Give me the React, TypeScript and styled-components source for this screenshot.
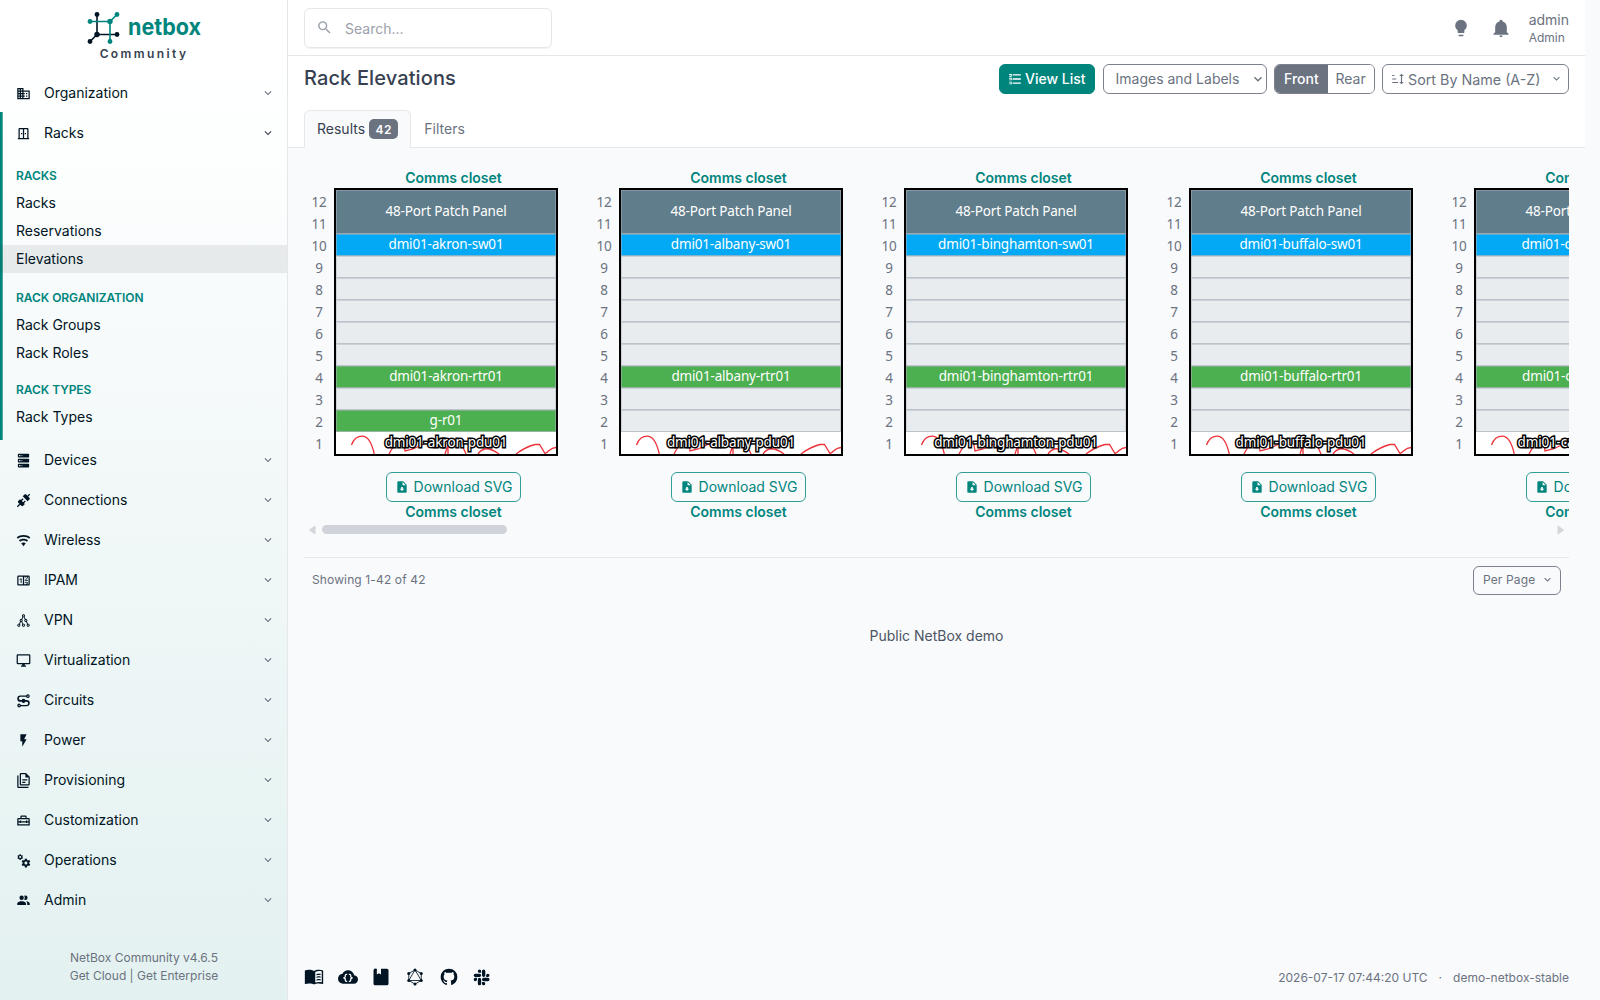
import React from 'react';
import styled, { createGlobalStyle, css } from 'styled-components';

const teal = '#00857d';
const ink = '#001423';
const muted = '#6b7280';
const line = '#e6e7e9';

const Global = createGlobalStyle`
  *, *::before, *::after { box-sizing: border-box; }
  body {
    margin: 0;
    background: #f9fafc;
    color: #374151;
    font: 400 14px/20px Inter, "Liberation Sans", sans-serif;
    overflow: hidden;
  }
`;

/* ---------- icons ---------- */

const icons = {
  domain: 'M18,15H16V17H18M18,11H16V13H18M20,19H12V17H14V15H12V13H14V11H12V9H20M10,7H8V5H10M10,11H8V9H10M10,15H8V13H10M10,19H8V17H10M6,7H4V5H6M6,11H4V9H6M6,15H4V13H6M6,19H4V17H6M12,7V3H2V21H22V7H12Z',
  rack: 'M18 3H6C4.9 3 4 3.9 4 5V19H3V21H21V19H20V5C20 3.9 19.1 3 18 3M11 19H6V5H11V19M18 19H13V5H18V19M8 11H10V13H8V11M14 11H16V13H14V11Z',
  server: 'M4,1H20A1,1 0 0,1 21,2V6A1,1 0 0,1 20,7H4A1,1 0 0,1 3,6V2A1,1 0 0,1 4,1M4,9H20A1,1 0 0,1 21,10V14A1,1 0 0,1 20,15H4A1,1 0 0,1 3,14V10A1,1 0 0,1 4,9M4,17H20A1,1 0 0,1 21,18V22A1,1 0 0,1 20,23H4A1,1 0 0,1 3,22V18A1,1 0 0,1 4,17M9,5H10V3H9V5M9,13H10V11H9V13M9,21H10V19H9V21M5,3V5H7V3H5M5,11V13H7V11H5M5,19V21H7V19H5Z',
  connection: 'M21.4 7.5C22.2 8.3 22.2 9.6 21.4 10.3L18.6 13.1L10.8 5.3L13.6 2.5C14.4 1.7 15.7 1.7 16.4 2.5L18.2 4.3L21.2 1.3L22.6 2.7L19.6 5.7L21.4 7.5M15.6 13.3L14.2 11.9L11.4 14.7L9.3 12.6L12.1 9.8L10.7 8.4L7.9 11.2L6.4 9.8L3.6 12.6C2.8 13.4 2.8 14.7 3.6 15.4L5.4 17.2L1.4 21.2L2.8 22.6L6.8 18.6L8.6 20.4C9.4 21.2 10.7 21.2 11.4 20.4L14.2 17.6L12.8 16.2L15.6 13.3Z',
  wifi: 'M12,21L15.6,16.2C14.6,15.45 13.35,15 12,15C10.65,15 9.4,15.45 8.4,16.2L12,21M12,3C7.95,3 4.21,4.34 1.2,6.6L3,9C5.5,7.12 8.62,6 12,6C15.38,6 18.5,7.12 21,9L22.8,6.6C19.79,4.34 16.05,3 12,3M12,9C9.3,9 6.81,9.89 4.8,11.4L6.6,13.8C8.1,12.67 9.97,12 12,12C14.03,12 15.9,12.67 17.4,13.8L19.2,11.4C17.19,9.89 14.7,9 12,9Z',
  counter: 'M4,4H20A2,2 0 0,1 22,6V18A2,2 0 0,1 20,20H4A2,2 0 0,1 2,18V6A2,2 0 0,1 4,4M4,6V18H11V6H4M20,18V6H18.76C19,6.54 18.95,7.07 18.95,7.13C18.88,7.8 18.41,8.5 18.24,8.75L15.91,11.3L19.23,11.28L19.24,12.5L14.04,12.47L14,11.47C14,11.47 17.05,8.24 17.2,7.95C17.34,7.67 17.91,6 16.5,6C15.27,6.05 15.41,7.3 15.41,7.3L13.87,7.31C13.87,7.31 13.88,6.65 14.25,6H13V18H15.58L15.57,17.14L16.54,17.13C16.54,17.13 17.45,16.97 17.46,16.08C17.5,15.08 16.65,15.08 16.5,15.08C16.37,15.08 15.43,15.13 15.43,15.95H13.91C13.91,15.95 13.95,13.89 16.5,13.89C19.1,13.89 18.96,15.91 18.96,15.91C18.96,15.91 19,17.16 17.85,17.63L18.37,18H20M8.92,16H7.42V10.2L5.62,10.76V9.53L8.76,8.41H8.92V16Z',
  graph: 'M19.5 17C19.36 17 19.24 17 19.11 17.04L17.5 13.79C17.95 13.34 18.25 12.71 18.25 12C18.25 10.62 17.13 9.5 15.75 9.5C15.61 9.5 15.5 9.5 15.35 9.54L13.74 6.3C14.21 5.84 14.5 5.21 14.5 4.5C14.5 3.12 13.38 2 12 2S9.5 3.12 9.5 4.5C9.5 5.2 9.79 5.84 10.26 6.29L8.65 9.54C8.5 9.5 8.39 9.5 8.25 9.5C6.87 9.5 5.75 10.62 5.75 12C5.75 12.71 6.05 13.34 6.5 13.79L4.89 17.04C4.76 17 4.64 17 4.5 17C3.12 17 2 18.12 2 19.5C2 20.88 3.12 22 4.5 22S7 20.88 7 19.5C7 18.8 6.71 18.16 6.24 17.71L7.86 14.46C8 14.5 8.12 14.5 8.25 14.5C8.38 14.5 8.5 14.5 8.63 14.46L10.26 17.71C9.79 18.16 9.5 18.8 9.5 19.5C9.5 20.88 10.62 22 12 22S14.5 20.88 14.5 19.5C14.5 18.12 13.38 17 12 17C11.87 17 11.74 17 11.61 17.04L10 13.8C10.45 13.35 10.75 12.71 10.75 12C10.75 11.3 10.46 10.67 10 10.21L11.61 6.96C11.74 7 11.87 7 12 7C12.13 7 12.26 7 12.39 6.96L14 10.21C13.54 10.66 13.25 11.3 13.25 12C13.25 13.38 14.37 14.5 15.75 14.5C15.88 14.5 16 14.5 16.13 14.46L17.76 17.71C17.29 18.16 17 18.8 17 19.5C17 20.88 18.12 22 19.5 22S22 20.88 22 19.5C22 18.12 20.88 17 19.5 17M4.5 20.5C3.95 20.5 3.5 20.05 3.5 19.5S3.95 18.5 4.5 18.5 5.5 18.95 5.5 19.5 5.05 20.5 4.5 20.5M13 19.5C13 20.05 12.55 20.5 12 20.5S11 20.05 11 19.5 11.45 18.5 12 18.5 13 18.95 13 19.5M7.25 12C7.25 11.45 7.7 11 8.25 11S9.25 11.45 9.25 12 8.8 13 8.25 13 7.25 12.55 7.25 12M11 4.5C11 3.95 11.45 3.5 12 3.5S13 3.95 13 4.5 12.55 5.5 12 5.5 11 5.05 11 4.5M14.75 12C14.75 11.45 15.2 11 15.75 11S16.75 11.45 16.75 12 16.3 13 15.75 13 14.75 12.55 14.75 12M19.5 20.5C18.95 20.5 18.5 20.05 18.5 19.5S18.95 18.5 19.5 18.5 20.5 18.95 20.5 19.5 20.05 20.5 19.5 20.5Z',
  monitor: 'M21,16H3V4H21M21,2H3C1.89,2 1,2.89 1,4V16A2,2 0 0,0 3,18H10V20H8V22H16V20H14V18H21A2,2 0 0,0 23,16V4C23,2.89 22.1,2 21,2Z',
  transit: 'M19 2A3 3 0 0 0 16.2 4H7A5 5 0 0 0 7 14H9.2A3 3 0 0 0 14.8 14H17A2.5 2.5 0 0 1 17 19H7.8A3 3 0 1 0 7.8 21H17A4.5 4.5 0 0 0 17 11H14.8A3 3 0 0 0 9.2 11H7A2.5 2.5 0 0 1 7 6H16.2A3 3 0 1 0 19 2M19 4A1 1 0 1 1 19 6A1 1 0 1 1 19 4M5 19A1 1 0 1 1 5 21A1 1 0 1 1 5 19Z',
  flash: 'M7,2V13H10V22L17,10H13L17,2H7Z',
  docs: 'M16 0H8C6.9 0 6 .9 6 2V18C6 19.1 6.9 20 8 20H20C21.1 20 22 19.1 22 18V6L16 0M20 18H8V2H15V7H20V18M4 4V22H20V24H4C2.9 24 2 23.1 2 22V4H4M10 10V12H18V10H10M10 14V16H15V14H10Z',
  toolbox: 'M20 8H17V6C17 4.9 16.1 4 15 4H9C7.9 4 7 4.9 7 6V8H4C2.9 8 2 8.9 2 10V20H22V10C22 8.9 21.1 8 20 8M9 6H15V8H9V6M20 18H4V15H6V16H8V15H16V16H18V15H20V18M18 13V12H16V13H8V12H6V13H4V10H20V13H18Z',
  cogs: 'M15.9,18.45C17.25,18.45 18.35,17.35 18.35,16C18.35,14.65 17.25,13.55 15.9,13.55C14.54,13.55 13.45,14.65 13.45,16C13.45,17.35 14.54,18.45 15.9,18.45M21.1,16.68L22.58,17.84C22.71,17.95 22.75,18.13 22.66,18.29L21.26,20.71C21.17,20.86 21,20.92 20.83,20.86L19.09,20.16C18.73,20.44 18.33,20.67 17.91,20.85L17.64,22.7C17.62,22.87 17.47,23 17.3,23H14.5C14.32,23 14.18,22.87 14.15,22.7L13.89,20.85C13.46,20.67 13.07,20.44 12.71,20.16L10.96,20.86C10.81,20.92 10.62,20.86 10.54,20.71L9.14,18.29C9.05,18.13 9.09,17.95 9.22,17.84L10.7,16.68L10.65,16L10.7,15.31L9.22,14.16C9.09,14.05 9.05,13.86 9.14,13.71L10.54,11.29C10.62,11.13 10.81,11.07 10.96,11.13L12.71,11.84C13.07,11.56 13.46,11.32 13.89,11.15L14.15,9.29C14.18,9.13 14.32,9 14.5,9H17.3C17.47,9 17.62,9.13 17.64,9.29L17.91,11.15C18.33,11.32 18.73,11.56 19.09,11.84L20.83,11.13C21,11.07 21.17,11.13 21.26,11.29L22.66,13.71C22.75,13.86 22.71,14.05 22.58,14.16L21.1,15.31L21.15,16L21.1,16.68M6.69,8.07C7.56,8.07 8.26,7.37 8.26,6.5C8.26,5.63 7.56,4.92 6.69,4.92C5.82,4.92 5.12,5.63 5.12,6.5C5.12,7.37 5.82,8.07 6.69,8.07M10.03,6.94L11,7.68C11.07,7.75 11.09,7.87 11.03,7.97L10.13,9.53C10.08,9.63 9.96,9.67 9.86,9.63L8.74,9.18L8,9.62L7.81,10.81C7.79,10.92 7.7,11 7.59,11H5.79C5.67,11 5.58,10.92 5.56,10.81L5.4,9.62L4.64,9.18L3.52,9.63C3.41,9.67 3.3,9.63 3.24,9.53L2.34,7.97C2.28,7.87 2.31,7.75 2.39,7.68L3.34,6.94L3.31,6.5L3.34,6.06L2.39,5.32C2.31,5.25 2.28,5.13 2.34,5.03L3.24,3.47C3.3,3.37 3.41,3.33 3.52,3.37L4.63,3.82L5.4,3.38L5.56,2.19C5.58,2.08 5.67,2 5.79,2H7.59C7.7,2 7.79,2.08 7.81,2.19L8,3.38L8.74,3.82L9.86,3.37C9.96,3.33 10.08,3.37 10.13,3.47L11.03,5.03C11.09,5.13 11.07,5.25 11,5.32L10.03,6.06L10.06,6.5L10.03,6.94Z',
  people: 'M16 17V19H2V17S2 13 9 13 16 17 16 17M12.5 7.5A3.5 3.5 0 1 0 9 11A3.5 3.5 0 0 0 12.5 7.5M15.94 13A5.32 5.32 0 0 1 18 17V19H22V17S22 13.37 15.94 13M15 4A3.39 3.39 0 0 0 13.07 4.59A5 5 0 0 1 13.07 10.41A3.39 3.39 0 0 0 15 11A3.5 3.5 0 0 0 15 4Z',
  chevron: 'M7.41,8.58L12,13.17L16.59,8.58L18,10L12,16L6,10L7.41,8.58Z',
  magnify: 'M9.5,3A6.5,6.5 0 0,1 16,9.5C16,11.11 15.41,12.59 14.44,13.73L14.71,14H15.5L20.5,19L19,20.5L14,15.5V14.71L13.73,14.44C12.59,15.41 11.11,16 9.5,16A6.5,6.5 0 0,1 3,9.5A6.5,6.5 0 0,1 9.5,3M9.5,5C7,5 5,7 5,9.5C5,12 7,14 9.5,14C12,14 14,12 14,9.5C14,7 12,5 9.5,5Z',
  bulb: 'M12,2A7,7 0 0,0 5,9C5,11.38 6.19,13.47 8,14.74V17A1,1 0 0,0 9,18H15A1,1 0 0,0 16,17V14.74C17.81,13.47 19,11.38 19,9A7,7 0 0,0 12,2M9,21A1,1 0 0,0 10,22H14A1,1 0 0,0 15,21V20H9V21Z',
  bell: 'M21,19V20H3V19L5,17V11C5,7.9 7.03,5.17 10,4.29C10,4.19 10,4.1 10,4A2,2 0 0,1 12,2A2,2 0 0,1 14,4C14,4.1 14,4.19 14,4.29C16.97,5.17 19,7.9 19,11V17L21,19M14,21A2,2 0 0,1 12,23A2,2 0 0,1 10,21',
  list: 'M22 4V6.200H8V4M22 10.900V13.100H8V10.900M22 17.800V20H8V17.800M2 3.500H6.500V8H2V6.500H5V5H2M2 10H6.500V14.200H2V12.700H5V11.500H2M2 16.500H6.500V21H2V19.500H5V18H2Z',
  sort: 'M19 7H22L18 3L14 7H17V17H14L18 21L22 17H19M2 17H12V19H2M6 5V7H2V5M2 11H9V13H2V11Z',
  fileDown: 'M14,2H6C4.89,2 4,2.89 4,4V20C4,21.11 4.89,22 6,22H18C19.11,22 20,21.11 20,20V8L14,2M12,19L8,15H10.5V12H13.5V15H16L12,19M13,9V3.5L18.5,9H13Z',
  bookOpen: 'M12 4.800C9.500 3 4.500 2.600 1 4.200V20.500C4.500 19.300 9.500 19.300 12 21C14.500 19.300 19.500 19.300 23 20.500V4.200C19.500 2.600 14.500 3 12 4.800M13.500 6C15.500 4.900 18.500 4.600 21.300 5.300V18.200C18.500 17.700 15.500 17.900 13.500 18.700V6M15 8.500V10C16.500 9.500 18.300 9.400 20 9.700V8.200C18.300 7.900 16.500 8 15 8.500M15 11.700V13.200C16.500 12.700 18.300 12.600 20 12.900V11.400C18.300 11.100 16.500 11.200 15 11.700M15 14.900V16.400C16.500 15.900 18.300 15.800 20 16.100V14.600C18.300 14.300 16.500 14.400 15 14.900Z',
  cloud: 'M19.35,10.04C18.67,6.59 15.64,4 12,4C9.11,4 6.61,5.64 5.36,8.04C2.35,8.36 0,10.91 0,14A6,6 0 0,0 6,20H19A5,5 0 0,0 24,15C24,12.36 21.95,10.22 19.35,10.04M11 9.5H10A.5.5 0 0 0 9.5 10V11.5A1.5 1.5 0 0 1 8 13A1.5 1.5 0 0 1 9.5 14.5V16A.5.5 0 0 0 10 16.5H11V18H10A2 2 0 0 1 8 16V15A1 1 0 0 0 7 14H6.5V12H7A1 1 0 0 0 8 11V10A2 2 0 0 1 10 8H11M17.5 14H17A1 1 0 0 0 16 15V16A2 2 0 0 1 14 18H13V16.5H14A.5.5 0 0 0 14.5 16V14.5A1.5 1.5 0 0 1 16 13A1.5 1.5 0 0 1 14.5 11.5V10A.5.5 0 0 0 14 9.5H13V8H14A2 2 0 0 1 16 10V11A1 1 0 0 0 17 12H17.5Z',
  book: 'M6 2A2 2 0 0 0 4 2L3 4V20A2 2 0 0 0 5 22H19A2 2 0 0 0 21 20V4A2 2 0 0 0 19 2H12V9L9.5 7.5L7 9V2Z',
  github: 'M12,2A10,10 0 0,0 2,12C2,16.42 4.87,20.17 8.84,21.5C9.34,21.58 9.5,21.27 9.5,21C9.5,20.77 9.5,20.14 9.5,19.31C6.73,19.91 6.14,17.97 6.14,17.97C5.68,16.81 5.03,16.5 5.03,16.5C4.12,15.88 5.1,15.9 5.1,15.9C6.1,15.97 6.63,16.93 6.63,16.93C7.5,18.45 8.97,18 9.54,17.76C9.63,17.11 9.89,16.67 10.17,16.42C7.95,16.17 5.62,15.31 5.62,11.5C5.62,10.39 6,9.5 6.65,8.79C6.55,8.54 6.2,7.5 6.75,6.15C6.75,6.15 7.59,5.88 9.5,7.17C10.29,6.95 11.15,6.84 12,6.84C12.85,6.84 13.71,6.95 14.5,7.17C16.41,5.88 17.25,6.15 17.25,6.15C17.8,7.5 17.45,8.54 17.35,8.79C18,9.5 18.38,10.39 18.38,11.5C18.38,15.32 16.04,16.16 13.81,16.41C14.17,16.72 14.5,17.33 14.5,18.26C14.5,19.6 14.5,20.68 14.5,21C14.5,21.27 14.66,21.59 15.17,21.5C19.14,20.16 22,16.42 22,12A10,10 0 0,0 12,2Z',
  slack: 'M6,15A2,2 0 0,1 4,17A2,2 0 0,1 2,15A2,2 0 0,1 4,13H6V15M7,15A2,2 0 0,1 9,13A2,2 0 0,1 11,15V20A2,2 0 0,1 9,22A2,2 0 0,1 7,20V15M9,7A2,2 0 0,1 7,5A2,2 0 0,1 9,3A2,2 0 0,1 11,5V7H9M9,8A2,2 0 0,1 11,10A2,2 0 0,1 9,12H4A2,2 0 0,1 2,10A2,2 0 0,1 4,8H9M17,10A2,2 0 0,1 19,8A2,2 0 0,1 21,10A2,2 0 0,1 19,12H17V10M16,10A2,2 0 0,1 14,12A2,2 0 0,1 12,10V5A2,2 0 0,1 14,3A2,2 0 0,1 16,5V10M14,18A2,2 0 0,1 16,20A2,2 0 0,1 14,22A2,2 0 0,1 12,20V18H14M14,17A2,2 0 0,1 12,15A2,2 0 0,1 14,13H19A2,2 0 0,1 21,15A2,2 0 0,1 19,17H14Z',
};
type IconName = keyof typeof icons;

const IconSvg = styled.svg<{ $size: number }>`
  display: block;
  flex: none;
  width: ${p => p.$size}px;
  height: ${p => p.$size}px;
  fill: currentColor;
`;
const Icon = ({ name, size = 15 }: { name: IconName; size?: number }) => (
  <IconSvg $size={size} viewBox="0 0 24 24"><path fillRule="evenodd" d={icons[name]} /></IconSvg>
);
const GraphqlIcon = () => (
  <IconSvg $size={20} viewBox="0 0 24 24">
    <path d="M12 3.5L19.5 7.8V16.2L12 20.5L4.5 16.2V7.8ZM12 3.5L19.5 16.2H4.5Z" fill="none" stroke="currentColor" strokeWidth="1" />
    {[[12, 3.5], [19.5, 7.8], [19.5, 16.2], [12, 20.5], [4.5, 16.2], [4.5, 7.8]].map(([x, y]) => (
      <circle key={`${x}-${y}`} cx={x} cy={y} r="1.8" />
    ))}
  </IconSvg>
);

/* ---------- sidebar ---------- */

const Page = styled.div`
  display: flex;
  height: 1000px;
  width: 1600px;
`;
const Sidebar = styled.aside`
  width: 288px;
  flex: none;
  display: flex;
  flex-direction: column;
  border-right: 1px solid ${line};
  background: linear-gradient(180deg, #fff 0%, #fdfffe 15%, #f8fbfc 29%, #e3f1f0 100%);
  color: ${ink};
`;
const Brand = styled.div`
  height: 73px;
  padding-top: 10px;
  display: flex;
  flex-direction: column;
  align-items: center;
`;
const Logo = styled.svg`
  display: block;
  width: 116px;
  height: 36px;
  overflow: visible;
`;
const Edition = styled.div`
  font-size: 12px;
  line-height: 16px;
  font-weight: 600;
  letter-spacing: 2.4px;
  padding-left: 1px;
  color: #374151;
`;
const Section = styled.div<{ $open?: boolean }>`
  ${p => p.$open && css`
    margin-top: -1px;
    padding-top: 1px;
    box-shadow: inset 2.7px 0 ${teal};
    padding-bottom: 9px;
  `}
`;
const NavItem = styled.div<{ $active?: boolean }>`
  height: 40px;
  padding: 0 12px 0 16px;
  display: flex;
  align-items: center;
  > svg:last-child {
    margin-left: auto;
    color: ${p => (p.$active ? '#374151' : muted)};
  }
`;
const NavLabel = styled.span`
  margin-left: 13px;
`;
const GroupTitle = styled.div<{ $gap: number }>`
  margin-top: ${p => p.$gap}px;
  height: 26px;
  padding-left: 16px;
  font-size: 12px;
  line-height: 26px;
  font-weight: 600;
  letter-spacing: -.05px;
  color: ${teal};
`;
const SubItem = styled.div<{ $active?: boolean }>`
  height: 28px;
  line-height: 28px;
  padding-left: 16px;
  background: ${p => (p.$active ? 'rgba(55,55,55,.09)' : 'transparent')};
`;
const SidebarFoot = styled.div`
  margin-top: auto;
  padding: 0 0 15px 1px;
  text-align: center;
  font-size: 12px;
  line-height: 18px;
  color: ${muted};
`;

const menu: [IconName, string][] = [
  ['server', 'Devices'], ['connection', 'Connections'], ['wifi', 'Wireless'], ['counter', 'IPAM'],
  ['graph', 'VPN'], ['monitor', 'Virtualization'], ['transit', 'Circuits'], ['flash', 'Power'],
  ['docs', 'Provisioning'], ['toolbox', 'Customization'], ['cogs', 'Operations'], ['people', 'Admin'],
];
const groups = [
  { title: 'RACKS', gap: 10, items: ['Racks', 'Reservations', 'Elevations'] },
  { title: 'RACK ORGANIZATION', gap: 12, items: ['Rack Groups', 'Rack Roles'] },
  { title: 'RACK TYPES', gap: 10, items: ['Rack Types'] },
];

const Nav = ({ icon, label, active }: { icon: IconName; label: string; active?: boolean }) => (
  <NavItem $active={active}>
    <Icon name={icon} size={15} />
    <NavLabel>{label}</NavLabel>
    <Icon name="chevron" size={14} />
  </NavItem>
);

const BrandLogo = () => (
  <Logo viewBox="0 0 116 36">
    <g fill={ink} stroke={ink} strokeWidth="1.6">
      <path d="M11 4.5V24.5H31M11 24.5L4 31.5" fill="none" />
      <g stroke="none"><circle cx="11" cy="4.5" r="2.4" /><circle cx="11" cy="24.5" r="2.7" /><circle cx="31" cy="24.5" r="2.4" /><circle cx="4" cy="31.5" r="2.4" /></g>
    </g>
    <g fill={teal} stroke={teal} strokeWidth="1.6">
      <path d="M4 11.5H24V31.5M24 11.5L31 4.5" fill="none" />
      <g stroke="none"><circle cx="4" cy="11.5" r="2.4" /><circle cx="24" cy="11.5" r="2.7" /><circle cx="31" cy="4.5" r="2.4" /><circle cx="24" cy="31.5" r="2.4" /></g>
    </g>
    <text x="42" y="25" fill={teal} fontFamily="Inter, sans-serif" fontWeight="700" fontSize="23" textLength="73" lengthAdjust="spacingAndGlyphs">netbox</text>
  </Logo>
);

/* ---------- header ---------- */

const Main = styled.main`
  width: 1297px;
  display: flex;
  flex-direction: column;
`;
const TopBar = styled.header`
  height: 56px;
  flex: none;
  padding: 0 16px;
  display: flex;
  align-items: center;
  justify-content: space-between;
  background: #fff;
  border-bottom: 1px solid ${line};
`;
const Search = styled.div`
  width: 248px;
  height: 40px;
  padding: 0 11px;
  display: flex;
  align-items: center;
  gap: 12px;
  border: 1px solid ${line};
  border-radius: 6px;
  box-shadow: 0 1px 1px rgba(31, 41, 55, .06);
  color: #9ba1ab;
  > svg { margin-top: -1px; }
  > span { padding-top: 2px; }
`;
const UserArea = styled.div`
  display: flex;
  align-items: center;
  gap: 20px;
  color: ${muted};
`;
const UserName = styled.div`
  margin-left: -2px;
  line-height: 18px;
  padding-top: 1px;
  small { display: block; font-size: 12px; line-height: 17px; }
`;
const Heading = styled.div`
  height: 92px;
  flex: none;
  padding: 8px 16px 0;
  display: flex;
  flex-direction: column;
  justify-content: space-between;
  background: #fff;
  border-bottom: 1px solid ${line};
`;
const HeadRow = styled.div`
  display: flex;
  justify-content: space-between;
`;
const Title = styled.h2`
  margin: 0;
  font-size: 20px;
  line-height: 28px;
  font-weight: 500;
  letter-spacing: .12px;
  color: #374151;
`;
const Toolbar = styled.div`
  display: flex;
  gap: 7.5px;
`;
const Button = styled.div<{ $w: number; $primary?: boolean }>`
  width: ${p => p.$w}px;
  height: 30px;
  display: flex;
  align-items: center;
  gap: 3px;
  padding: 0 8px;
  border: 1px solid ${p => (p.$primary ? teal : '#7b818d')};
  border-radius: 6px;
  background: ${p => (p.$primary ? teal : '#fff')};
  color: ${p => (p.$primary ? '#fff' : muted)};
  font-weight: ${p => (p.$primary ? 500 : 400)};
  white-space: nowrap;
`;
const SortButton = styled(Button)`
  font-size: 14.3px;
  padding-right: 5px;
  > span { padding-top: 1px; }
  > svg:last-child { margin-left: auto; margin-top: -2px; }
`;
const ModeSelect = styled(Button)`
  padding: 0 0 0 12px;
  justify-content: space-between;
`;
const Toggle = styled.div`
  width: 100.5px;
  height: 30px;
  display: flex;
  border: 1px solid #7b818d;
  border-radius: 6px;
  overflow: hidden;
  line-height: 28px;
  text-align: center;
  color: ${muted};
`;
const ToggleSide = styled.div<{ $on?: boolean }>`
  width: ${p => (p.$on ? 53 : 46)}px;
  background: ${p => (p.$on ? muted : '#fff')};
  color: ${p => (p.$on ? '#fff' : muted)};
  font-weight: ${p => (p.$on ? 500 : 400)};
`;
const Tabs = styled.div`
  display: flex;
  margin-bottom: -1px;
`;
const Tab = styled.div<{ $on?: boolean }>`
  height: 38px;
  display: flex;
  align-items: center;
  gap: 4px;
  padding: 0 12px 1px;
  border: 1px solid ${p => (p.$on ? line : 'transparent')};
  border-bottom: 0;
  border-radius: 6px 6px 0 0;
  background: ${p => (p.$on ? '#f9fafc' : 'transparent')};
  color: ${p => (p.$on ? '#374151' : muted)};
`;
const Count = styled.span`
  height: 20px;
  padding: 0 6.5px;
  border-radius: 5px;
  background: ${muted};
  color: #fff;
  font-size: 12px;
  line-height: 21px;
  font-weight: 600;
  letter-spacing: .4px;
`;

/* ---------- rack elevations ---------- */

const Content = styled.section`
  flex: 1;
  display: flex;
  flex-direction: column;
  padding: 20px 16px 0;
`;
const Racks = styled.div`
  height: 354px;
  flex: none;
  display: flex;
  overflow: hidden;
`;
const RackColumn = styled.div`
  width: 285px;
  flex: none;
  display: flex;
  flex-direction: column;
`;
const Centered = styled.div`
  padding-left: 14px;
  display: flex;
  flex-direction: column;
  align-items: center;
`;
const Location = styled.div`
  height: 20px;
  line-height: 20px;
  font-weight: 600;
  color: ${teal};
`;
const Elevation = styled.div`
  display: flex;
  height: 268px;
  font-family: "Noto Sans", sans-serif;
  font-size: 13.5px;
  letter-spacing: -.17px;
`;
const Units = styled.div`
  width: 30px;
  padding-top: 3px;
  text-align: center;
  line-height: 22px;
  color: ${muted};
`;
const Frame = styled.div`
  width: 224px;
  border: 2px solid #000;
`;
const Slot = styled.div<{ $bg: string; $u?: number }>`
  height: ${p => (p.$u ?? 1) * 22}px;
  padding-bottom: 3px;
  display: flex;
  align-items: center;
  justify-content: center;
  background: ${p => p.$bg};
  box-shadow: inset 0 -1px rgba(173, 181, 189, .5), inset 0 0 0 1px rgba(173, 181, 189, .5);
  color: #fff;
`;
const PowerSlot = styled.div`
  height: 22px;
  display: grid;
  place-items: center;
  background: #fff;
  overflow: hidden;
  > * { grid-area: 1 / 1; }
`;
const Trace = styled.svg`
  display: block;
  width: 220px;
  height: 22px;
  fill: none;
  stroke: #ed1c24;
  stroke-width: 1.3;
  opacity: .9;
`;
const PowerLabel = styled.span`
  z-index: 1;
  line-height: 20px;
  margin-top: -3px;
  color: #fff;
  -webkit-text-stroke: 3px #000;
  paint-order: stroke fill;
`;
const Download = styled.div`
  margin-top: 16px;
  width: 135px;
  height: 30px;
  display: flex;
  align-items: center;
  justify-content: center;
  gap: 5px;
  border: 1px solid #339d97;
  border-radius: 6px;
  color: ${teal};
  white-space: nowrap;
`;
const ScrollTrack = styled.div`
  height: 15px;
  padding: 0 4px;
  display: flex;
  align-items: center;
`;
const ScrollThumb = styled.div`
  width: 185px;
  height: 9px;
  margin: 0 auto 0 6px;
  border-radius: 5px;
  background: #d0d3d9;
`;
const Arrow = styled.svg`
  width: 8px;
  height: 10px;
  fill: #d3d6db;
  stroke: #d3d6db;
  stroke-linejoin: round;
`;
const Paging = styled.div`
  margin-top: 20px;
  height: 46px;
  padding: 0 8px 1px;
  display: flex;
  align-items: center;
  justify-content: space-between;
  border-top: 1px solid ${line};
  color: ${muted};
  font-size: 12px;
  letter-spacing: .13px;
`;
const PerPage = styled.div`
  width: 88px;
  height: 29px;
  padding: 0 6px 0 9px;
  display: flex;
  align-items: center;
  justify-content: space-between;
  border: 1px solid #7b818d;
  border-radius: 6px;
  > svg { margin-top: -2px; }
`;
const Banner = styled.div`
  margin-top: 23px;
  text-align: center;
  color: #4b5563;
`;
const Footer = styled.footer`
  margin-top: auto;
  height: 46px;
  display: flex;
  justify-content: space-between;
  align-items: center;
  color: ${muted};
  font-size: 12px;
`;
const FootIcons = styled.div`
  display: flex;
  gap: 13.7px;
  color: ${ink};
`;
const Stamp = styled.div`
  display: flex;
  gap: 11px;
  padding-top: 1px;
`;

const sites = ['akron', 'albany', 'binghamton', 'buffalo', 'camden'];
const empty = '#e9ecef';
const units = [12, 11, 10, 9, 8, 7, 6, 5, 4, 3, 2, 1];

const Rack = ({ site }: { site: string }) => (
  <RackColumn>
    <Centered><Location>Comms closet</Location></Centered>
    <Elevation>
      <Units>{units.map(u => <div key={u}>{u}</div>)}</Units>
      <Frame>
        <Slot $bg="#607d8b" $u={2}>48-Port Patch Panel</Slot>
        <Slot $bg="#03a9f4">dmi01-{site}-sw01</Slot>
        {[9, 8, 7, 6, 5].map(u => <Slot key={u} $bg={empty} />)}
        <Slot $bg="#4caf50">dmi01-{site}-rtr01</Slot>
        <Slot $bg={empty} />
        {site === 'akron' ? <Slot $bg="#4caf50">g-r01</Slot> : <Slot $bg={empty} />}
        <PowerSlot>
          <Trace viewBox="0 0 220 22">
            <path d="M15.5 13C18 6 22 4 27 4.2C33 5 36 12 38.3 22M53 22L57.5 14M67.5 10L69 19L77 17L88 12M109 22L112 13V22M126 13L130 22M142 22C147 15 153 15 163 22M180 22Q189 15 199 12.5H203.500L209 21.500C213 20 214 15.500 220 15.500" />
          </Trace>
          <PowerLabel>dmi01-{site}-pdu01</PowerLabel>
        </PowerSlot>
      </Frame>
    </Elevation>
    <Centered>
      <Download><Icon name="fileDown" size={14} />Download SVG</Download>
      <Location>Comms closet</Location>
    </Centered>
  </RackColumn>
);

export default function App() {
  return (
    <>
      <Global />
      <Page>
        <Sidebar>
          <Brand>
            <BrandLogo />
            <Edition>Community</Edition>
          </Brand>
          <Section><Nav icon="domain" label="Organization" /></Section>
          <Section $open>
            <Nav icon="rack" label="Racks" active />
            {groups.map(g => (
              <React.Fragment key={g.title}>
                <GroupTitle $gap={g.gap}>{g.title}</GroupTitle>
                {g.items.map(i => <SubItem key={i} $active={i === 'Elevations'}>{i}</SubItem>)}
              </React.Fragment>
            ))}
          </Section>
          {menu.map(([icon, label]) => <Nav key={label} icon={icon} label={label} />)}
          <SidebarFoot>
            <div>NetBox Community v4.6.5</div>
            <div>Get Cloud | Get Enterprise</div>
          </SidebarFoot>
        </Sidebar>
        <Main>
          <TopBar>
            <Search><Icon name="magnify" size={17} /><span>Search...</span></Search>
            <UserArea>
              <Icon name="bulb" size={20} />
              <Icon name="bell" size={20} />
              <UserName>admin<small>Admin</small></UserName>
            </UserArea>
          </TopBar>
          <Heading>
            <HeadRow>
              <Title>Rack Elevations</Title>
              <Toolbar>
                <Button $w={96} $primary><Icon name="list" size={14} />View List</Button>
                <ModeSelect $w={164}>Images and Labels<Icon name="chevron" size={16} /></ModeSelect>
                <Toggle><ToggleSide $on>Front</ToggleSide><ToggleSide>Rear</ToggleSide></Toggle>
                <SortButton $w={187}><Icon name="sort" size={14} /><span>Sort By Name (A-Z)</span><Icon name="chevron" size={13} /></SortButton>
              </Toolbar>
            </HeadRow>
            <Tabs>
              <Tab $on>Results<Count>42</Count></Tab>
              <Tab>Filters</Tab>
            </Tabs>
          </Heading>
          <Content>
            <Racks>{sites.map(s => <Rack key={s} site={s} />)}</Racks>
            <ScrollTrack>
              <Arrow viewBox="0 0 8 10"><path d="M7 1V9L1.500 5Z" /></Arrow>
              <ScrollThumb />
              <Arrow viewBox="0 0 8 10"><path d="M1 1V9L6.500 5Z" /></Arrow>
            </ScrollTrack>
            <Paging>
              <span>Showing 1-42 of 42</span>
              <PerPage>Per Page<Icon name="chevron" size={13} /></PerPage>
            </Paging>
            <Banner>Public NetBox demo</Banner>
            <Footer>
              <FootIcons>
                <Icon name="bookOpen" size={20} />
                <Icon name="cloud" size={20} />
                <Icon name="book" size={20} />
                <GraphqlIcon />
                <Icon name="github" size={20} />
                <Icon name="slack" size={20} />
              </FootIcons>
              <Stamp><span>2026-07-17 07:44:20 UTC</span><span>·</span><span>demo-netbox-stable</span></Stamp>
            </Footer>
          </Content>
        </Main>
      </Page>
    </>
  );
}
